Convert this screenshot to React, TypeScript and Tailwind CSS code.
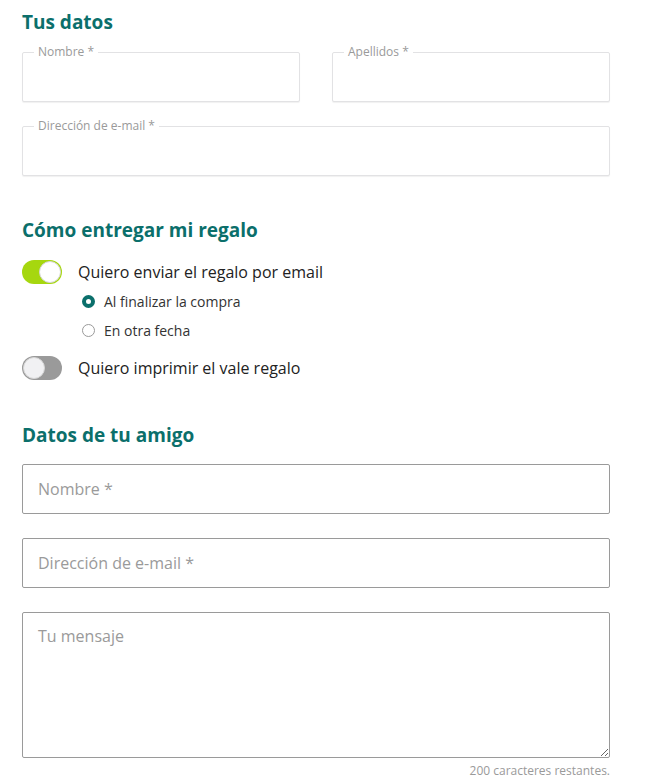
import React from "react";

const font = { fontFamily: '"Open Sans", "Noto Sans", Arial, sans-serif' };

function Toggle({ on }: { on: boolean }) {
  return (
    <div
      className={`relative h-[24px] w-[40px] shrink-0 rounded-full ${on ? "bg-[#a6d70f]" : "bg-[#9a9a9a]"}`}
    >
      <div
        className={`absolute top-[1px] h-[22px] w-[22px] rounded-full border border-[#d6d6d6] ${on ? "right-[1px] bg-white" : "left-[1px] bg-[#f1f1f3]"}`}
      />
    </div>
  );
}

function Radio({ checked, label }: { checked: boolean; label: string }) {
  return (
    <div className="flex h-[29px] items-center pl-[60px]">
      {checked ? (
        <div className="h-[13px] w-[13px] rounded-full border-[4px] border-[#0b6f6b] bg-white" />
      ) : (
        <div className="h-[13px] w-[13px] rounded-full border border-[#9a9a9a] bg-white" />
      )}
      <span className="ml-[9px] text-[14px] text-[#333]">{label}</span>
    </div>
  );
}

function Fieldset({ label }: { label: string }) {
  return (
    <div className="relative h-[50px] rounded-[2px] border border-[#e2e2e4] bg-white shadow-[0_1px_1px_rgba(0,0,0,0.06)]">
      <span className="absolute left-[11px] top-[-10px] bg-white px-[4px] text-[12px] leading-[17px] text-[#9a9a9a]">
        {label}
      </span>
    </div>
  );
}

export default function App() {
  return (
    <div className="min-h-[780px] w-[649px] bg-white" style={font}>
      <div className="w-[588px] pl-[22px] box-content">
        <h2 className="pt-[8px] text-[19px] font-bold leading-[28px] text-[#0b6f6b]">Tus datos</h2>
        <div className="mt-[16px] grid grid-cols-2 gap-[32px]">
          <Fieldset label="Nombre *" />
          <Fieldset label="Apellidos *" />
        </div>
        <div className="mt-[24px]">
          <Fieldset label="Dirección de e-mail *" />
        </div>

        <h2 className="mt-[40px] text-[19px] font-bold leading-[28px] text-[#0b6f6b]">Cómo entregar mi regalo</h2>
        <div className="mt-[16px] flex h-[24px] items-center">
          <Toggle on />
          <span className="ml-[16px] text-[16px] text-[#222]">Quiero enviar el regalo por email</span>
        </div>
        <div className="mt-[3px]">
          <Radio checked label="Al finalizar la compra" />
          <Radio checked={false} label="En otra fecha" />
        </div>
        <div className="mt-[11px] flex h-[24px] items-center">
          <Toggle on={false} />
          <span className="ml-[16px] text-[16px] text-[#222]">Quiero imprimir el vale regalo</span>
        </div>

        <h2 className="mt-[41px] text-[19px] font-bold leading-[28px] text-[#0b6f6b]">Datos de tu amigo</h2>
        <input
          className="mt-[15px] block h-[50px] w-full rounded-[2px] border border-[#9a9a9a] px-[15px] text-[16px] text-[#222] outline-none placeholder:text-[#9a9a9a]"
          placeholder="Nombre *"
        />
        <input
          className="mt-[24px] block h-[50px] w-full rounded-[2px] border border-[#9a9a9a] px-[15px] text-[16px] text-[#222] outline-none placeholder:text-[#9a9a9a]"
          placeholder="Dirección de e-mail *"
        />
        <textarea
          className="mt-[24px] block h-[146px] w-full rounded-[2px] border border-[#9a9a9a] px-[15px] pt-[11px] text-[16px] text-[#222] outline-none placeholder:text-[#9a9a9a]"
          placeholder="Tu mensaje"
        />
        <div className="mt-[5px] text-right text-[12px] leading-[16px] text-[#9a9a9a]">200 caracteres restantes.</div>
      </div>
    </div>
  );
}
